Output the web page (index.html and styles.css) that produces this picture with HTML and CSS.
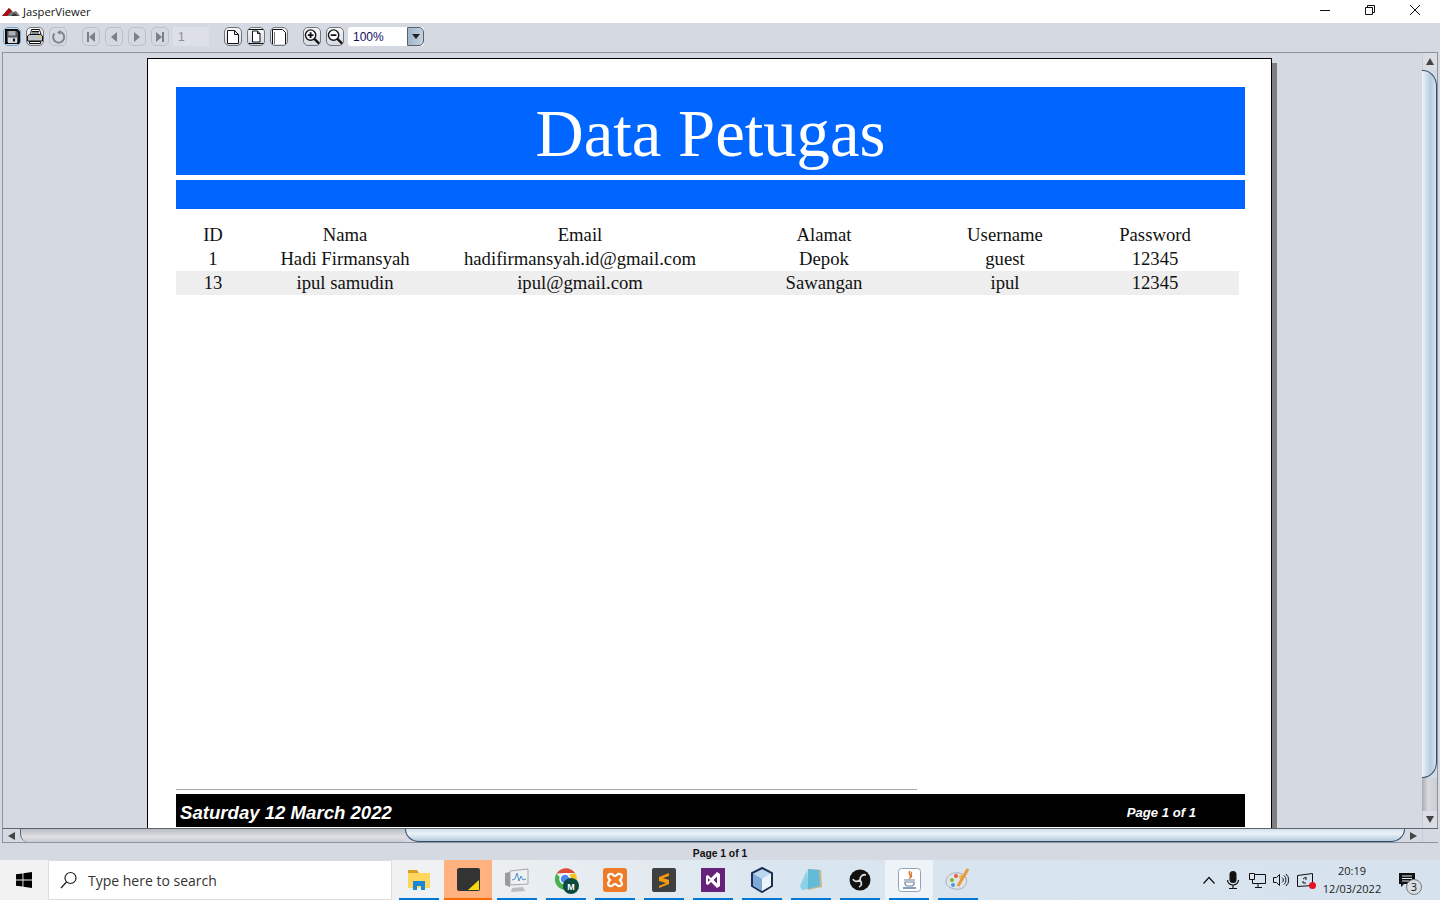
FILE: index.html
```html
<!DOCTYPE html>
<html lang="en">
<head>
<meta charset="utf-8">
<title>JasperViewer</title>
<link rel="stylesheet" href="styles.css">
</head>
<body>
<div class="app">
  <header class="titlebar">
    <div class="title-left">
      <svg class="logo" width="18" height="10" viewBox="0 0 18 10"><path d="M0 9 7 1l4 4 3-1 4 5z" fill="#777"/><path d="M0 9 7 1l3 3-5 5z" fill="#a80f14"/><path d="M9 9l3-3 4 3z" fill="#333"/></svg>
      <span>JasperViewer</span>
    </div>
    <div class="winctl">
      <svg width="12" height="12" viewBox="0 0 12 12"><path d="M1 6.500h10" stroke="#111" fill="none"/></svg>
      <svg width="12" height="12" viewBox="0 0 12 12"><path d="M1.500 3.500h7v7h-7zM3.500 3.500v-2h7v7h-2" stroke="#111" fill="none"/></svg>
      <svg width="12" height="12" viewBox="0 0 12 12"><path d="M1 1l10 10M11 1 1 11" stroke="#111" fill="none"/></svg>
    </div>
  </header>

  <div class="toolbar">
    <button class="tb focus"><svg width="15" height="15" viewBox="0 0 15 15"><path d="M1 1h11l2 2v11H1z" fill="#55585f" stroke="#0c0c0c" stroke-width="2"/><path d="M3.500 2h7v4.500h-7z" fill="#a9adb5"/><path d="M3 8.500h9V14H3z" fill="#d6d9de"/><path d="M8 9.500h2v3H8z" fill="#111"/></svg></button>
    <button class="tb"><svg width="16" height="15" viewBox="0 0 16 15"><path d="M4.500.500h8l1.500 5H3.500z" fill="#fff" stroke="#111"/><path d="M.5 7l2-1.500h11l2 1.500v5H.5z" fill="#c2c5cb" stroke="#111"/><path d="M2.500 12.500h11v2h-11z" fill="#fff" stroke="#111"/><path d="M5 2.500h7M5 4h7" stroke="#111"/><path d="M12 7h2v2h-2z" fill="#d8d13b"/></svg></button>
    <button class="tb off"><svg width="14" height="14" viewBox="0 0 14 14"><path d="M3.500 3.500a5.500 5.500 0 1 0 5.500-1.700" fill="none" stroke="#7f848d" stroke-width="2"/><path d="M9.500 0v5L6 2.500z" fill="#7f848d"/></svg></button>
    <span class="gap"></span>
    <button class="tb off"><svg width="10" height="10" viewBox="0 0 10 10"><path d="M1 0h2v10H1zM9 0v10L3 5z" fill="#7c8088"/></svg></button>
    <button class="tb off"><svg width="10" height="10" viewBox="0 0 10 10"><path d="M8 0v10L2 5z" fill="#7c8088"/></svg></button>
    <button class="tb off"><svg width="10" height="10" viewBox="0 0 10 10"><path d="M2 0v10l6-5z" fill="#7c8088"/></svg></button>
    <button class="tb off"><svg width="10" height="10" viewBox="0 0 10 10"><path d="M1 0v10l6-5zM7 0h2v10H7z" fill="#7c8088"/></svg></button>
    <span class="pagefield">1</span>
    <span class="gap"></span>
    <button class="tb"><svg width="12" height="14" viewBox="0 0 12 14"><path d="M.5.500h7l4 4v9H.5zM7.500.500v4h4" fill="#fff" stroke="#111"/></svg></button>
    <button class="tb"><svg width="16" height="15" viewBox="0 0 16 15"><path d="M0 .5h16M0 14.500h16" stroke="#111"/><path d="M4.500 2h5l2.500 2.500V13H4.500zM9.500 2v2.500H12" fill="#fff" stroke="#111"/></svg></button>
    <button class="tb"><svg width="16" height="15" viewBox="0 0 16 15"><path d="M1.500 15V.5h10l3 3V15" fill="#fff" stroke="#111"/><path d="M3.500 15V3" fill="none" stroke="#777"/></svg></button>
    <span class="gap"></span>
    <button class="tb"><svg width="17" height="17" viewBox="0 0 17 17"><circle cx="7" cy="7" r="5.500" fill="#fff" stroke="#111" stroke-width="1.500"/><path d="M4 7h6M7 4v6" stroke="#111" stroke-width="2"/><path d="M11 11l5.500 5.500" stroke="#111" stroke-width="2.500"/></svg></button>
    <button class="tb"><svg width="17" height="17" viewBox="0 0 17 17"><circle cx="7" cy="7" r="5.500" fill="#fff" stroke="#111" stroke-width="1.500"/><path d="M4 7h6" stroke="#111" stroke-width="2"/><path d="M11 11l5.500 5.500" stroke="#111" stroke-width="2.500"/></svg></button>
    <div class="zoomcombo"><span class="zoomval">100%</span><span class="zoomarrow"><svg width="8" height="5" viewBox="0 0 8 5"><path d="M0 0h8L4 5z" fill="#222"/></svg></span></div>
  </div>

  <div class="viewer">
    <div class="viewer-top">
      <div class="canvas">
        <div class="sheet-wrap">
          <main class="sheet">
            <div class="band title-band">Data Petugas</div>
            <div class="band sub-band"></div>
            <div class="grid head-row">
              <span>ID</span><span>Nama</span><span>Email</span><span>Alamat</span><span>Username</span><span>Password</span>
            </div>
            <div class="grid">
              <span>1</span><span>Hadi Firmansyah</span><span>hadifirmansyah.id@gmail.com</span><span>Depok</span><span>guest</span><span>12345</span>
            </div>
            <div class="grid alt">
              <span>13</span><span>ipul samudin</span><span>ipul@gmail.com</span><span>Sawangan</span><span>ipul</span><span>12345</span>
            </div>
            <div class="spacer"></div>
            <div class="footer-rule"></div>
            <div class="footer-band">
              <span class="foot-date">Saturday 12 March 2022</span>
              <span class="foot-page">Page 1 of 1</span>
            </div>
          </main>
        </div>
      </div>
      <div class="vscroll">
        <div class="sbtn"><svg width="8" height="7" viewBox="0 0 8 7"><path d="M4 0l4 7H0z" fill="#444"/></svg></div>
        <div class="vthumb"></div>
        <div class="vtrack"></div>
        <div class="sbtn"><svg width="8" height="7" viewBox="0 0 8 7"><path d="M0 0h8L4 7z" fill="#444"/></svg></div>
      </div>
    </div>
    <div class="hscroll">
      <div class="hbtn"><svg width="7" height="8" viewBox="0 0 7 8"><path d="M0 4l7-4v8z" fill="#444"/></svg></div>
      <div class="htrack"></div>
      <div class="hthumb"></div>
      <div class="hbtn"><svg width="7" height="8" viewBox="0 0 7 8"><path d="M7 4L0 0v8z" fill="#444"/></svg></div>
      <div class="corner"></div>
    </div>
  </div>
  <div class="status">Page 1 of 1</div>

  <footer class="taskbar">
    <div class="start"><svg width="16" height="16" viewBox="0 0 16 16"><path d="M0 2.300 6.500 1.400v6.100H0zM7.400 1.300 16 0v7.500H7.400zM0 8.500h6.500v6.100L0 13.700zM7.400 8.500H16V16l-8.600-1.300z" fill="#000"/></svg></div>
    <div class="search">
      <svg width="18" height="18" viewBox="0 0 18 18"><circle cx="10.500" cy="7" r="5.500" fill="none" stroke="#222" stroke-width="1.200"/><path d="M6.500 11l-5.500 6" stroke="#222" stroke-width="1.300"/></svg>
      <span>Type here to search</span>
    </div>
    <div class="apps">
      <div class="app-i run"><svg width="22" height="20" viewBox="0 0 22 20"><path d="M0 0h9l2 3H0z" fill="#d9a021"/><path d="M0 3h22v15H0z" fill="#ffd75e"/><path d="M5 11h12v9h-4v-4H9v4H5z" fill="#1a87d6"/></svg></div>
      <div class="app-i orange"><svg width="23" height="23" viewBox="0 0 23 23"><rect width="23" height="23" rx="2" fill="#333"/><path d="M11 22l11-10v10z" fill="#f5d90a"/></svg></div>
      <div class="app-i run"><svg width="26" height="25" viewBox="0 0 26 25"><path d="M6 3l18-2v15L6 17z" fill="#eef0f2" stroke="#a5a8ac"/><path d="M8 12l3-1 2-6 2 8 2-5 2 4 3-1" stroke="#4a90d0" fill="none"/><path d="M1 5l5-1v15l-5-2z" fill="#9a9a9a"/><path d="M8 20l11-1 2 4-14 1z" fill="#bcbcbc"/></svg></div>
      <div class="app-i run"><svg width="27" height="27" viewBox="0 0 27 27"><path d="M3.500 6.500a11 11 0 0 1 18.500-.5H12z" fill="#dd4b39"/><path d="M3.500 6.500A11 11 0 0 0 11 23l4-6-3-1z" fill="#4aae4a"/><path d="M22 6a11 11 0 0 1-11 17l6-10-1-5z" fill="#f6c324"/><circle cx="12" cy="12" r="5" fill="#4a8af4" stroke="#fff" stroke-width="1.500"/><circle cx="18" cy="19" r="8" fill="#0d4a3e"/><text x="18" y="22.500" class="m">M</text></svg></div>
      <div class="app-i run"><svg width="24" height="24" viewBox="0 0 24 24"><rect width="24" height="24" rx="3" fill="#ed7b27"/><path d="M7 6c3-1 3 2 5 2s2-3 5-2 2 4 0 6c2 2 3 5 0 6s-3-2-5-2-2 3-5 2-2-4 0-6c-2-2-3-5 0-6z" fill="none" stroke="#fff" stroke-width="2.200"/></svg></div>
      <div class="app-i run"><svg width="24" height="24" viewBox="0 0 24 24"><rect width="24" height="24" rx="2" fill="#3f3f3f"/><path d="M17 5 7 9v4l7 2-7 3v2l10-4v-4l-6-2 6-2z" fill="#f59b10"/></svg></div>
      <div class="app-i run"><svg width="24" height="24" viewBox="0 0 24 24"><path d="M0 0h24v24H0z" fill="#68217a"/><path d="M16 4l3 2v12l-3 2-6-6-3 3-2-1V8l2-1 3 3zM7 10v4l2-2zM16 8.500 12.500 12l3.500 3.500z" fill="#fff" fill-rule="evenodd"/></svg></div>
      <div class="app-i run"><svg width="24" height="26" viewBox="0 0 24 26"><path d="M12 1l10 5v13l-10 6-10-6V6z" fill="#bcd6ee" stroke="#1b2f55" stroke-width="2"/><path d="M12 12l9-5.500v12L12 24z" fill="#ecf4fb"/><path d="M3 6.500l9 5.500v12l-9-5.500z" fill="#7fa9d6"/></svg></div>
      <div class="app-i run"><svg width="24" height="24" viewBox="0 0 24 24"><path d="M9 1l13 1 1 17-14 3z" fill="#c8b78c"/><path d="M9 1l11 1 1 16-13 3z" fill="#62bcd8"/><path d="M1 18 8 2l1 19-6 1z" fill="#8cd2e6"/></svg></div>
      <div class="app-i run"><svg width="22" height="22" viewBox="0 0 22 22"><circle cx="11" cy="11" r="10.500" fill="#111"/><path d="M11 11C11 7 14 5 17 6M11 11C8 13 5 13 4 10M11 11C13 14 13 17 10 18" fill="none" stroke="#ddd" stroke-width="1.800"/></svg></div>
      <div class="app-i run active"><svg width="23" height="24" viewBox="0 0 23 24"><rect x=".5" y=".5" width="22" height="23" rx="3" fill="#fff" stroke="#8fa3ba"/><path d="M12 3c-3 3 2 4 0 7 4-2-1-4 2-6" fill="none" stroke="#d8742b" stroke-width="1.300"/><path d="M6 12h11M7 14h9a3 3 0 0 1-3 4h-3a3 3 0 0 1-3-4z" fill="none" stroke="#6d8098" stroke-width="1.200"/><path d="M5 20h13" stroke="#5c7fa8" stroke-width="1.500"/></svg></div>
      <div class="app-i run"><svg width="26" height="26" viewBox="0 0 26 26"><path d="M1 15c0-7 7-10 13-9 6 1 9 6 7 11-2 4-6 6-11 5-5-1-9-3-9-7z" fill="#dfe6ea" stroke="#aab"/><circle cx="7" cy="13" r="2" fill="#7ab53d"/><circle cx="11" cy="9" r="2" fill="#e65a4a"/><circle cx="16" cy="10" r="2" fill="#e8b93a"/><circle cx="8" cy="18" r="2" fill="#4a9bd8"/><path d="M13 19 23 2" stroke="#e89a3c" stroke-width="3"/></svg></div>
    </div>
    <div class="tray">
      <svg width="12" height="8" viewBox="0 0 12 8"><path d="M.5 7.500 6 1.500l5.500 6" fill="none" stroke="#111" stroke-width="1.200"/></svg>
      <svg width="14" height="18" viewBox="0 0 14 18"><rect x="3.500" y="0" width="7" height="12" rx="3.500" fill="#111"/><path d="M1.500 9a5.500 5 0 0 0 11 0M7 14v3M3 17.500h8" fill="none" stroke="#111" stroke-width="1.200"/></svg>
      <svg width="17" height="15" viewBox="0 0 17 15"><path d="M3.500 1.500h13v9h-13zM9 11v3M6 14.500h7" fill="none" stroke="#111"/><path d="M.5 .5h5v6h-5z" fill="#dfe7ee" stroke="#111"/></svg>
      <svg width="16" height="14" viewBox="0 0 16 14"><path d="M.5 4.500h3l3-3v11l-3-3h-3zM9 4.500a3 3 0 0 1 0 5M11 2.500a6 6 0 0 1 0 9M13 1a8 8 0 0 1 0 12" fill="none" stroke="#111"/></svg>
      <span class="netwarn"><svg width="17" height="14" viewBox="0 0 17 14"><path d="M.5 2.500 15.500.5v12L.5 13.500zM6 6l3-2M9 4v3M9 10H6V8" fill="none" stroke="#111"/></svg><i class="dot"></i></span>
    </div>
    <div class="clock"><span>20:19</span><span>12/03/2022</span></div>
    <div class="notif">
      <svg width="16" height="14" viewBox="0 0 16 14"><path d="M0 0h16v11H5l-3 3v-3H0z" fill="#111"/><path d="M3 3h10M3 5.500h10M3 8h7" stroke="#dfe8f0"/></svg>
      <span class="badge">3</span>
    </div>
  </footer>
</div>
</body>
</html>
```

FILE: styles.css
```css
* { box-sizing: border-box; }
html, body { margin: 0; height: 100%; }
body { font-family: "Liberation Sans", Arial, sans-serif; overflow: hidden; background: #d5d9e2; }
.app { width: 1440px; height: 900px; display: flex; flex-direction: column; }

.titlebar { height: 23px; background: #fff; display: flex; justify-content: space-between; align-items: center; flex: none; }
.title-left { display: flex; align-items: center; gap: 3px; padding-left: 2px; font: 11.200px "Open Sans", sans-serif; color: #111; }
.winctl { display: flex; gap: 33px; padding-right: 19px; margin-top: -3px; }

.toolbar { height: 29px; flex: none; background: #d5d9e2; display: flex; align-items: center; padding: 0 0 2px 3px; gap: 5px; }
.tb { width: 18px; height: 19px; padding: 0; border: 1px solid #70757e; border-radius: 5px; background: linear-gradient(#f6f7f8, #d5d9e2); display: flex; align-items: center; justify-content: center; flex: none; overflow: hidden; }
.tb.focus { border-color: #6ea4cf; background: #d5d9e2; }
.tb.off { border-color: #bcc0c8; background: #d5d9e2; }
.gap { width: 5px; flex: none; }
.pagefield { width: 36px; height: 19px; background: #dde0e6; color: #8a8f98; font-size: 12px; line-height: 21px; padding-left: 5px; margin-left: -1px; flex: none; }
.zoomcombo { display: flex; width: 76px; height: 19px; flex: none; border-radius: 3px; background: #fff; margin-left: -1px; }
.zoomval { flex: 1; font-size: 12px; line-height: 21px; padding-left: 5px; color: #101060; }
.zoomarrow { width: 17px; background: linear-gradient(90deg, #9fb6cc, #c4d0dc); border: 1px solid #59616d; border-radius: 0 5px 5px 0; display: flex; align-items: center; justify-content: center; }

.viewer { height: 791px; margin: 0 2px; border-top: 1px solid #8f939c; flex: none; width: 1436px; display: flex; flex-direction: column; }
.viewer-top { flex: none; height: 775px; display: flex; }
.canvas { flex: none; width: 1420px; overflow: hidden; border-left: 1px solid #8f939c; }
.sheet-wrap { padding: 5px 0 0 144px; }
.sheet { width: 1125px; height: 770px; background: #fff; border: 1px solid #000; border-bottom: 0; box-shadow: 5px 5px 0 #808080; padding: 28px 26px 1px 28px; display: flex; flex-direction: column; font-family: "Liberation Serif", "Times New Roman", serif; }
.band { background: #0066ff; }
.title-band { height: 88px; color: #fff; font-size: 66.700px; line-height: 94px; text-align: center; flex: none; }
.sub-band { height: 29px; margin-top: 5px; flex: none; }
.grid { display: grid; grid-template-columns: 74px 190px 280px 208px 154px 146px; width: 1063px; height: 24px; line-height: 24px; font-size: 18.700px; text-align: center; color: #111; flex: none; }
.head-row { margin-top: 14px; }
.alt { background: #eeeeee; }
.spacer { flex: 1; }
.footer-rule { width: 741px; height: 1px; background: #a8a8a8; flex: none; }
.footer-band { height: 33px; margin-top: 4px; background: #000; color: #fff; display: flex; justify-content: space-between; align-items: center; font-family: "Liberation Sans", Arial, sans-serif; font-style: italic; font-weight: bold; flex: none; }
.foot-date { font-size: 18.600px; padding-left: 4px; padding-top: 4px; }
.foot-page { font-size: 13.100px; padding-right: 49px; padding-top: 3px; }

.vscroll { width: 16px; flex: none; display: flex; flex-direction: column; border-right: 1px solid #8f939c; }
.sbtn { height: 17px; display: flex; align-items: center; justify-content: center; flex: none; background: #dadde4; border-left: 1px solid #c8ccd4; }
.vthumb { height: 708px; flex: none; border-bottom: 1px solid #324d69; border-top: 1px solid #324d69; border-right: 1px solid #324d69; border-radius: 0 14px 14px 0 / 0 16px 16px 0; background: linear-gradient(90deg, #eef4f8, #b5cce0 60%, #d3e2ee); }
.vtrack { flex: 1; background: linear-gradient(90deg, #a9acb2, #d9dade 40%, #c9ccd2); }

.hscroll { height: 15px; flex: none; display: flex; align-items: stretch; border-top: 1px solid #5d6470; border-bottom: 1px solid #8f939c; border-left: 1px solid #8f939c; }
.hbtn { width: 17px; flex: none; display: flex; align-items: center; justify-content: center; }
.htrack { width: 385px; flex: none; background: linear-gradient(#b9bcc2, #e0e1e5 60%, #c9ccd2); border-radius: 0 0 0 8px; border-left: 1px solid #5d6470; }
.hthumb { width: 1000px; flex: none; background: linear-gradient(#d4e2ec, #eaf2f7 40%, #b4cbdc); border: 1px solid #324d69; border-top: 0; border-radius: 0 0 14px 14px / 0 0 13px 13px; }
.corner { flex: 1; border-left: 1px solid #c8ccd4; }

.status { flex: none; height: 16px; text-align: center; font-size: 10.300px; font-weight: bold; color: #111; line-height: 22px; }

.taskbar { height: 40px; flex: none; display: flex; align-items: center; background: linear-gradient(90deg, #f2f2f2 0, #f0f1f2 30%, #d9e6ef 55%, #d6e3ee 100%); margin-top: auto; }
.start { width: 48px; height: 40px; display: flex; align-items: center; justify-content: center; flex: none; }
.search { width: 344px; height: 40px; background: #fff; border: 1px solid #dcdcdc; display: flex; align-items: center; gap: 10px; padding-left: 11px; font: 14px "Open Sans", sans-serif; color: #333; flex: none; }
.apps { display: flex; padding-left: 3px; gap: 1px; flex: none; width: 800px; }
.app-i { width: 48px; height: 40px; display: flex; align-items: center; justify-content: center; flex: none; position: relative; }
.app-i.run::after { content: ""; position: absolute; left: 4px; right: 4px; bottom: 0; height: 2px; background: #0078d7; }
.app-i.orange { background: #ffb27f; border-bottom: 2px solid #ff6a00; }
.app-i.active { background: #eef3f8; }
.m { font: bold 9px "Liberation Sans", sans-serif; fill: #fff; text-anchor: middle; }
.tray { display: grid; grid-template-columns: repeat(5, 24px); align-items: center; justify-items: center; flex: none; margin-left: 5px; }
.netwarn { position: relative; display: flex; }
.dot { position: absolute; right: -2px; bottom: -2px; width: 7px; height: 7px; border-radius: 50%; background: #e81123; }
.clock { display: flex; flex-direction: column; align-items: center; font: 11px/18px "Open Sans", sans-serif; color: #222; width: 70px; flex: none; }
.notif { position: relative; margin-left: 12px; display: flex; }
.badge { position: absolute; left: 7px; top: 6px; width: 16px; height: 16px; border-radius: 50%; background: #d7dde3; border: 1px solid #777; font: 11px/14px "Open Sans", sans-serif; text-align: center; color: #111; }
```
